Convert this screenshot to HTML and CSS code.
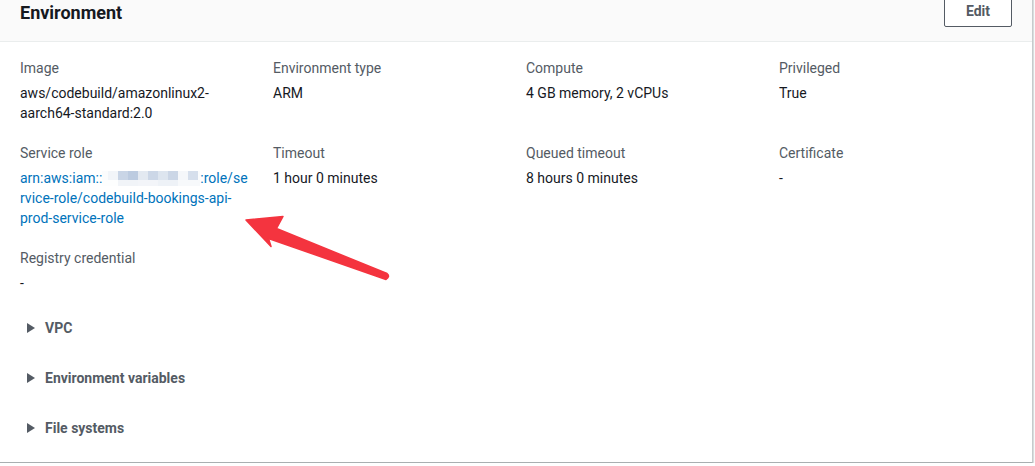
FILE: index.html
```html
<!DOCTYPE html>
<html lang="en">
<head>
<meta charset="utf-8">
<title>Environment</title>
<link rel="stylesheet" href="styles.css">
</head>
<body>
<div class="card">
  <div class="card-header">
    <h2 class="title">Environment</h2>
    <button class="btn">Edit</button>
  </div>
  <div class="kv-grid">
    <div class="kv">
      <div class="kv-label">Image</div>
      <div class="kv-value">aws/codebuild/amazonlinux2-<br>aarch64-standard:2.0</div>
    </div>
    <div class="kv">
      <div class="kv-label">Environment type</div>
      <div class="kv-value">ARM</div>
    </div>
    <div class="kv">
      <div class="kv-label">Compute</div>
      <div class="kv-value">4 GB memory, 2 vCPUs</div>
    </div>
    <div class="kv">
      <div class="kv-label">Privileged</div>
      <div class="kv-value">True</div>
    </div>
    <div class="kv">
      <div class="kv-label">Service role</div>
      <div class="kv-value"><a class="link" href="#">arn:aws:iam::<span class="redact"></span>:role/se<br>rvice-role/codebuild-bookings-api-<br>prod-service-role</a></div>
    </div>
    <div class="kv">
      <div class="kv-label">Timeout</div>
      <div class="kv-value">1 hour 0 minutes</div>
    </div>
    <div class="kv">
      <div class="kv-label">Queued timeout</div>
      <div class="kv-value">8 hours 0 minutes</div>
    </div>
    <div class="kv">
      <div class="kv-label">Certificate</div>
      <div class="kv-value">-</div>
    </div>
    <div class="kv">
      <div class="kv-label">Registry credential</div>
      <div class="kv-value">-</div>
    </div>
  </div>
  <div class="sections">
    <div class="expander"><span class="caret"></span><span class="exp-title">VPC</span></div>
    <div class="expander"><span class="caret"></span><span class="exp-title">Environment variables</span></div>
    <div class="expander"><span class="caret"></span><span class="exp-title">File systems</span></div>
  </div>
</div>
<svg class="arrow" width="1035" height="466" viewBox="0 0 1035 466" aria-hidden="true">
  <path d="M246 220 L283 216.5 L276.5 228.5 L387 273.5 Q390.5 276.5 386 279.5 L268.5 238.5 L271 246.5 Z" fill="#f4343f" stroke="#f4343f" stroke-width="1.5" stroke-linejoin="round"/>
</svg>
</body>
</html>
```

FILE: styles.css
```css
* { box-sizing: border-box; }

html, body {
  margin: 0;
  padding: 0;
  background: #ffffff;
  font-family: Roboto, "Liberation Sans", Arial, sans-serif;
  font-size: 14px;
  line-height: 20px;
  color: #16191f;
  overflow: hidden;
}

.card {
  width: 1033px;
  margin-top: -5px;
  background: #ffffff;
  border-right: 1px solid #c6cbcc;
  border-bottom: 1px solid #a9afb1;
  box-shadow: 1px 1px 1px 0 rgba(0, 28, 36, 0.15);
  padding-bottom: 9px;
}

.card-header {
  height: 47px;
  display: flex;
  justify-content: space-between;
  align-items: flex-start;
  padding: 0 20px;
  background: #fafafa;
  border-bottom: 1px solid #eaeded;
}

.title {
  margin: 7px 0 0 0;
  font-size: 18px;
  line-height: 22px;
  font-weight: 700;
  color: #16191f;
}

.btn {
  height: 32px;
  width: 68px;
  padding: 0;
  font-family: inherit;
  font-size: 14px;
  font-weight: 700;
  color: #545b64;
  background: #ffffff;
  border: 1px solid #545b64;
  border-radius: 2px;
}

.kv-grid {
  display: grid;
  grid-template-columns: repeat(4, 1fr);
  column-gap: 20px;
  row-gap: 20px;
  padding: 16px 20px 0 20px;
}

.kv-label {
  color: #545b64;
}

.kv-value {
  margin-top: 5px;
  color: #16191f;
}

.link {
  color: #0073bb;
  text-decoration: none;
}

.redact {
  display: inline-block;
  width: 98px;
  height: 15px;
  vertical-align: -3px;
  background:
    linear-gradient(90deg, #fbfcfd 0 6px, #f2f5f9 6px 16px, #c9d5e6 16px 26px, #bccbe0 26px 36px, #e3e9f1 36px 46px, #ccd7e7 46px 56px, #dde5ef 56px 66px, #cbd6e6 66px 76px, #f5f7fa 76px 86px, #d6dfec 86px 96px, #fbfcfd 96px) top / 100% 9px no-repeat,
    linear-gradient(90deg, #fdfefe 0 16px, #f1f4f8 16px 36px, #f3f5f9 36px 56px, #eef2f7 56px 76px, #f7f9fb 76px 98px) bottom / 100% 6px no-repeat;
}

.sections {
  margin-top: 10px;
}

.expander {
  display: flex;
  align-items: center;
  padding: 15px 0;
  padding-left: 27px;
}

.caret {
  width: 0;
  height: 0;
  border-top: 5px solid transparent;
  border-bottom: 5px solid transparent;
  border-left: 8px solid #545b64;
  margin-right: 10px;
}

.exp-title {
  font-weight: 700;
  color: #545b64;
}

.arrow {
  position: absolute;
  left: 0;
  top: 0;
  pointer-events: none;
}
```
